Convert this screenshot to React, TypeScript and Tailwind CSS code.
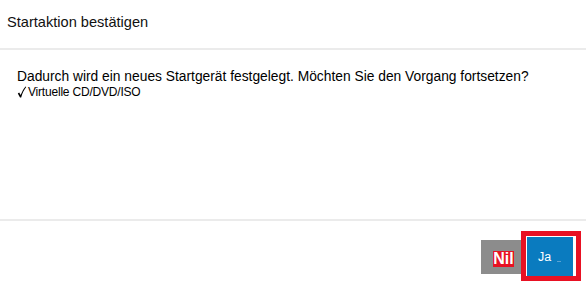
import React from "react";

export default function App() {
  return (
    <div
      className="w-[586px] h-[284px] bg-white flex flex-col text-black overflow-hidden"
      style={{ fontFamily: '"Liberation Sans", Arial, "DejaVu Sans", sans-serif' }}
    >
      <div className="h-[48px] pt-[14px] pl-[7px] text-[14.6px] leading-[17px] text-[#111]">
        Startaktion bestätigen
      </div>
      <div className="h-[2px] bg-[#ebebeb]" />
      <div className="flex-1 pl-[17px] pt-[19px]">
        <div className="text-[13.8px] leading-[16px]">
          Dadurch wird ein neues Startgerät festgelegt. Möchten Sie den Vorgang fortsetzen?
        </div>
        <div className="flex items-center text-[12px] leading-[14px] tracking-[-0.2px]">
          <svg width="11" height="14" viewBox="0 0 11 14" className="shrink-0">
            <path
              d="M0.8 8.6 L2.2 7.6 L3.6 10 C5 6.6 6.6 3.6 8.6 1.4 L9.2 2 C7.2 4.6 5.4 8.2 4.2 12.4 L3 12.4 Z"
              fill="#000"
            />
          </svg>
          <span>Virtuelle CD/DVD/ISO</span>
        </div>
      </div>
      <div className="h-[2px] bg-[#ebebeb]" />
      <div className="h-[63px] flex justify-end items-start pt-[10px] pr-[5px]">
        <div className="mt-[9px] w-[40px] h-[34px] bg-[#8c8c8c] pl-[12px] pt-[11px]">
          <span className="block w-[21px] h-[16px] bg-[#e81123] text-white font-bold text-[16px] leading-[16px] text-center">
            Nil
          </span>
        </div>
        <div className="border-[5px] border-[#e81123] bg-white pl-[1px] pr-[3px] pt-[1px]">
          <div className="w-[46px] h-[39px] bg-[#0a7bbf] flex items-center pl-[11px] text-white text-[12.5px] leading-[14px]">
            <span>Ja</span>
            <span className="ml-[6px] mt-[9px] w-[4px] h-[1px] bg-[#5aa3d3]" />
          </div>
        </div>
      </div>
    </div>
  );
}
